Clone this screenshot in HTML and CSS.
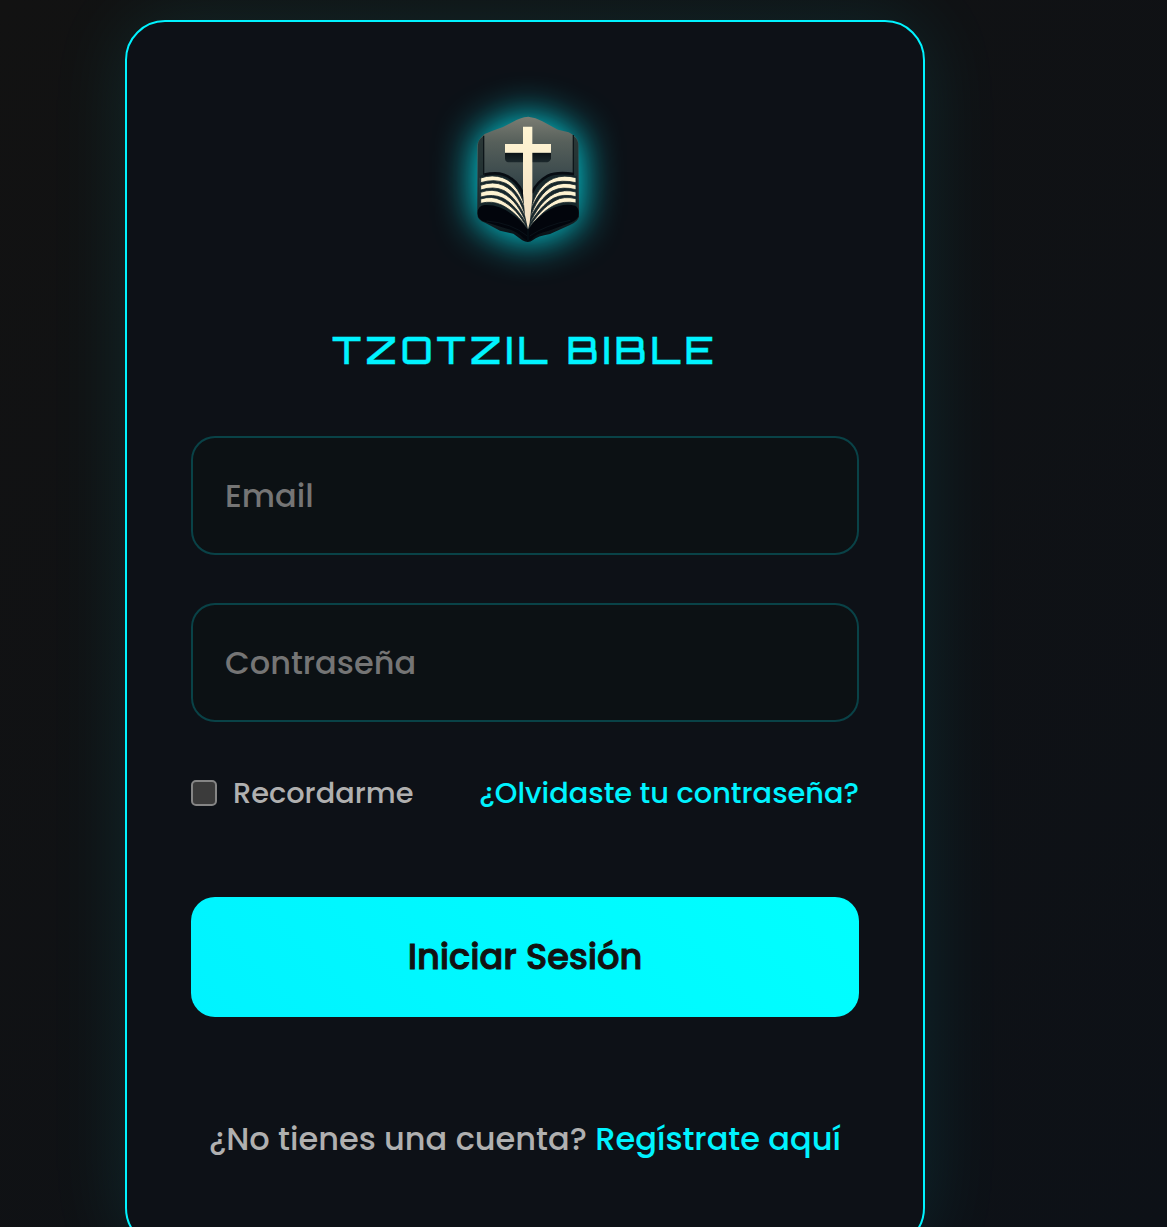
FILE: index.html
```html
<!DOCTYPE html>
<html lang="es">
<head>
<meta charset="utf-8">
<meta name="viewport" content="width=device-width, initial-scale=1">
<title>Tzotzil Bible</title>
<link rel="stylesheet" href="styles.css">
</head>
<body>
<main class="card">
  <svg class="logo" viewBox="0 0 540 540" aria-hidden="true">
    <defs>
      <linearGradient id="cover" x1="0" y1="0" x2="0" y2="1">
        <stop offset="0" stop-color="#7b7d73"/>
        <stop offset=".2" stop-color="#57605b"/>
        <stop offset=".48" stop-color="#3a494c"/>
        <stop offset=".75" stop-color="#1b2a2d"/>
        <stop offset="1" stop-color="#050a10"/>
      </linearGradient>
      <linearGradient id="cream" x1="0" y1="0" x2="0" y2="1">
        <stop offset="0" stop-color="#fff5d3"/>
        <stop offset="1" stop-color="#f2dfc3"/>
      </linearGradient>
      <linearGradient id="shade" x1="0" y1="0" x2="0" y2="1">
        <stop offset="0" stop-color="#0b1216"/>
        <stop offset="1" stop-color="#1c282c"/>
      </linearGradient>
    </defs>
    <path fill="url(#cover)" d="M112 168Q112 150 134 132L158 122Q192 112 218 96Q240 82 265 80Q287 82 307 94L354 119L386 127Q411 139 415 159L417 350V380Q413 395 390 405L330 432Q292 438 279 450Q265 461 247 451L220 431L180 422L135 398Q112 390 112 374Z"/>
    <path fill="none" stroke="#0c1519" stroke-width="4" d="M131 137V258M400 135V255"/>
    <path fill="#1b292b" opacity=".75" d="M114 164Q114 150 129 139V260L118 264V365L113 373ZM402 139Q415 149 415 166V370L408 340V256H402Z"/>
    <path fill="url(#shade)" d="M195 188H333V206Q330 217 316 217H210Q195 217 195 206Z"/>
    <path fill="#17272b" d="M120 257Q171 241 205 258Q239 276 254 326L264 409L274 326Q289 280 325 258Q361 241 410 257V350Q340 342 300 380L265 422Q215 349 119 345Z"/>
    <path fill="none" stroke="#070c12" stroke-width="8" d="M133 254Q184 242 214 266Q242 285 253 324M276 309Q290 276 324 257Q350 245 402 252"/>
    <g fill="url(#cream)" stroke="#17272b" stroke-width="2.5">
      <path d="M122 264Q157 252 188 263C225 276 246 313 258 363C239 319 222 293 197 280Q165 265 122 278Z"/>
      <path d="M122 286Q160 272 190 286C226 303 244 337 260 388C238 344 220 319 193 302Q162 287 122 300Z"/>
      <path d="M122 307Q158 294 187 309C222 326 242 358 262 405C238 366 218 341 190 325Q160 310 122 321Z"/>
      <path d="M122 327Q157 316 184 331C217 348 240 374 263 416C237 382 216 361 187 346Q157 331 122 340Z"/>
      <path d="M408 263Q371 253 341 265C305 280 283 316 270 363C290 320 307 295 333 281Q363 268 408 278Z"/>
      <path d="M408 285Q369 274 340 288C307 304 285 340 268 388C291 345 309 320 337 303Q366 288 408 299Z"/>
      <path d="M408 306Q371 296 343 311C311 328 288 359 267 405C292 366 312 342 340 325Q369 310 408 320Z"/>
      <path d="M408 326Q371 317 345 332C314 349 290 375 265 416C293 382 315 360 343 346Q371 332 408 339Z"/>
    </g>
    <path fill="url(#cream)" d="M249 110H277V162H333V188H277V326L269 398L264 418L255 376L249 310V188H195V162H249Z"/>
    <path fill="#02050c" d="M113 370Q112 348 133 345Q180 343 218 374Q242 389 264 420Q289 381 331 358Q370 338 405 347Q420 354 415 380Q407 393 383 401L326 422Q286 431 276 447Q265 457 250 444Q230 423 196 415L139 397Q112 390 113 370Z"/>
    <path fill="none" stroke="#17252d" stroke-width="2" opacity=".6" d="M140 393Q215 399 262 438M269 438Q317 405 391 391"/>
    <path fill="none" stroke="#081a20" stroke-width="2" d="M264 419V451"/>
  </svg>
  <h1 class="title">TZOTZIL BIBLE</h1>
  <form class="form">
    <input class="field" type="email" placeholder="Email" aria-label="Email">
    <input class="field field-password" type="password" placeholder="Contraseña" aria-label="Contraseña">
    <div class="options">
      <label class="remember"><input class="check" type="checkbox"><span>Recordarme</span></label>
      <a class="forgot" href="#">¿Olvidaste tu contraseña?</a>
    </div>
    <button class="submit" type="button">Iniciar Sesión</button>
  </form>
  <p class="signup"><span class="question">¿No tienes una cuenta?</span> <a class="register" href="#">Regístrate aquí</a></p>
</main>
</body>
</html>
```
FILE: styles.css
```css
* { box-sizing: border-box; }
html { height: 100%; overflow: hidden; }
body {
  height: 1227px;
  margin: 0;
  padding: 20px 242px 0 125px;
  overflow: hidden;
  background: linear-gradient(135deg, #121212, #0d1117);
  font-family: Poppins, Inter, sans-serif;
  font-weight: 500;
}
.card {
  display: flex;
  flex-direction: column;
  align-items: center;
  width: 800px;
  height: 1228px;
  padding: 68px 64px 0;
  border: 2px solid #00f3ff;
  border-radius: 40px;
  background: #0d1117;
  box-shadow: 0 0 80px rgba(0, 243, 255, .1);
}
.logo {
  width: 180px;
  height: 180px;
  margin-left: 9px;
  flex: none;
  overflow: visible;
  filter: drop-shadow(0 0 20px #00f3ff);
}
.title {
  margin: 50px 0 0;
  height: 60px;
  color: #00f3ff;
  font-family: Orbitron, Inter, sans-serif;
  font-size: 38.4px;
  font-weight: 500;
  letter-spacing: 4px;
  line-height: 58px;
  white-space: nowrap;
  -webkit-text-stroke: .3px #00f3ff;
}
.form { width: 668px; margin-top: 56px; }
.field {
  display: block;
  width: 100%;
  height: 119px;
  padding: 0 32px;
  border: 2px solid rgba(0, 243, 255, .22);
  border-radius: 24px;
  background: #0c1114;
  color: #fff;
  font: 500 32px Poppins, Inter, sans-serif;
}
.field::placeholder { color: #757575; }
.field-password { margin-top: 48px; }
.options {
  display: flex;
  justify-content: space-between;
  align-items: center;
  height: 46px;
  margin-top: 48px;
  font-size: 28.8px;
  white-space: nowrap;
}
.remember { display: flex; align-items: center; gap: 16px; color: #b0b0b0; }
.check {
  appearance: none;
  width: 26px;
  height: 26px;
  margin: 0;
  border: 2px solid #858585;
  border-radius: 5px;
  background: #3b3b3b;
}
.forgot, .register { color: #00f3ff; text-decoration: none; }
.submit {
  display: block;
  width: 100%;
  height: 120px;
  margin-top: 81px;
  padding: 0 0 2px;
  border: 0;
  border-radius: 24px;
  background: linear-gradient(45deg, #00f3ff, #00ffff);
  color: #121212;
  font: 500 35.2px Poppins, Inter, sans-serif;
  -webkit-text-stroke: 1px #121212;
}
.signup {
  margin: 98px 0 0;
  color: #b0b0b0;
  font-size: 32px;
  line-height: 48px;
  white-space: nowrap;
}
```
